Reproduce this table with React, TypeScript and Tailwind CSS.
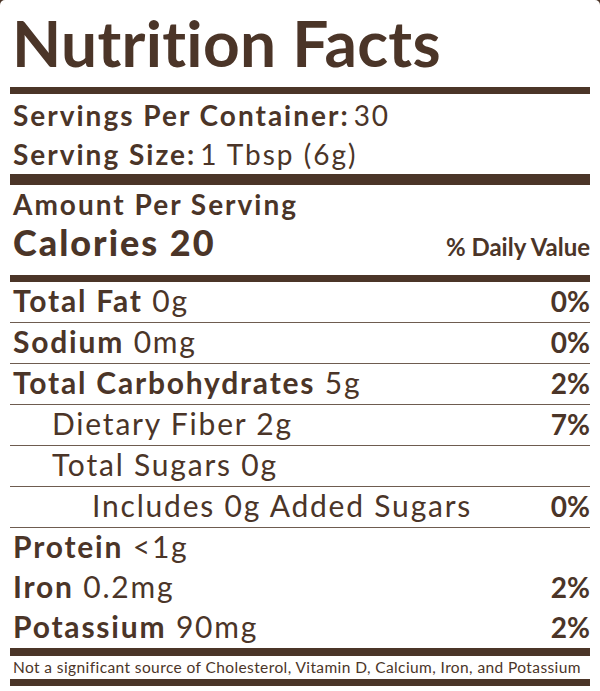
const brown = "text-[#4b3528]";

type Row = {
  label: string;
  amount: string;
  dv?: string;
  bold?: boolean;
  indent?: number;
  line?: boolean;
};

const rows: Row[] = [
  { label: "Total Fat", amount: "0g", dv: "0%", bold: true, line: true },
  { label: "Sodium", amount: "0mg", dv: "0%", bold: true, line: true },
  { label: "Total Carbohydrates", amount: "5g", dv: "2%", bold: true, line: true },
  { label: "Dietary Fiber", amount: "2g", dv: "7%", indent: 1, line: true },
  { label: "Total Sugars", amount: "0g", indent: 1, line: true },
  { label: "Includes 0g Added Sugars", amount: "", dv: "0%", indent: 2, line: true },
  { label: "Protein", amount: "<1g", bold: true },
  { label: "Iron", amount: "0.2mg", dv: "2%", bold: true },
  { label: "Potassium", amount: "90mg", dv: "2%", bold: true },
];

function NutrientRow({ row }: { row: Row }) {
  const pad = row.indent === 2 ? "pl-[82px]" : row.indent === 1 ? "pl-[42px]" : "pl-[3px]";
  return (
    <div
      className={`flex items-end justify-between pb-[7px] ${row.line ? "h-[41px] border-b border-[#6e5c50]" : "h-[40px]"}`}
    >
      <div className={`${pad} text-[30px] leading-none tracking-[1.8px]`}>
        {row.bold ? (
          <>
            <span className="font-bold">{row.label}</span>{" "}
            <span className="font-normal">{row.amount}</span>
          </>
        ) : (
          <span className="font-normal">
            {row.label}
            {row.amount ? ` ${row.amount}` : ""}
          </span>
        )}
      </div>
      {row.dv && <div className="text-[28px] leading-none font-bold">{row.dv}</div>}
    </div>
  );
}

export default function App() {
  return (
    <div className="w-[600px] h-[691px] bg-[#4b3528]">
      <div
        className={`h-full bg-white rounded-t-[5px] px-[10px] ${brown}`}
        style={{ fontFamily: "Lato, 'Open Sans', sans-serif" }}
      >
        <div className="h-[87px] flex items-end pb-[12px] pl-[2px]">
          <h1 className="text-[64px] leading-none font-bold tracking-[0.3px]">Nutrition Facts</h1>
        </div>
        <div className="h-[7px] bg-[#4b3528]" />

        <div className="h-[80px] pl-[3px] text-[28px] leading-none tracking-[2px]">
          <div className="h-[40px] flex items-end pb-[5px]">
            <span className="font-bold">Servings Per Container:</span>
            <span className="font-normal ml-[4px]">30</span>
          </div>
          <div className="h-[38px] flex items-end pb-[4px]">
            <span className="font-bold">Serving Size:</span>
            <span className="font-normal ml-[4px]">1 Tbsp (6g)</span>
          </div>
        </div>
        <div className="h-[11px] bg-[#4b3528]" />

        <div className="h-[90px] pl-[3px]">
          <div className="h-[36px] flex items-end pb-[3px] text-[28px] leading-none font-bold tracking-[2px]">
            Amount Per Serving
          </div>
          <div className="h-[42px] flex items-end justify-between pb-[3px]">
            <span className="text-[36px] leading-none font-black tracking-[2px]">Calories 20</span>
            <span className="text-[24px] leading-none font-bold mb-[1px]">% Daily Value</span>
          </div>
        </div>
        <div className="h-[7px] bg-[#4b3528]" />

        {rows.map((r) => (
          <NutrientRow key={r.label} row={r} />
        ))}

        <div className="h-[8px] bg-[#4b3528]" />
        <div className="h-[23px] flex items-center pl-[3px] text-[15.5px] leading-none font-normal tracking-[0.4px]">
          Not a significant source of Cholesterol, Vitamin D, Calcium, Iron, and Potassium
        </div>
        <div className="h-[7px] bg-[#4b3528]" />
      </div>
    </div>
  );
}
